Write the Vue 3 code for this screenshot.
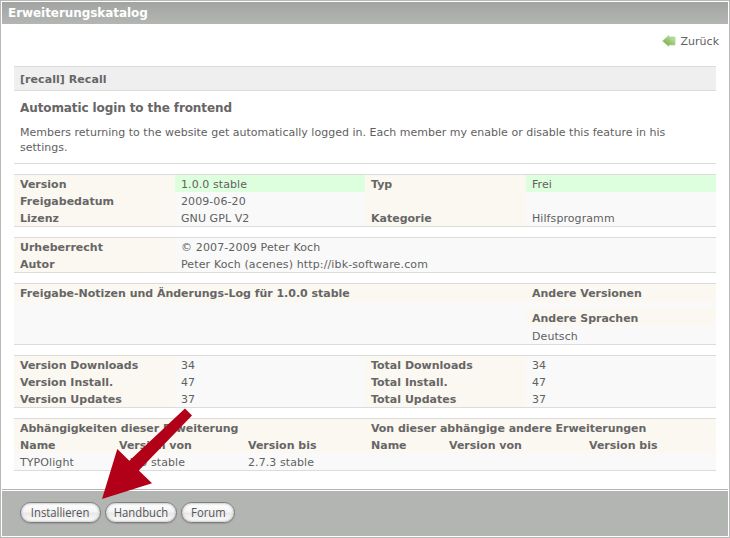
<script setup>
const stats = [
  ['Version Downloads', '34', 'Total Downloads', '34'],
  ['Version Install.', '47', 'Total Install.', '47'],
  ['Version Updates', '37', 'Total Updates', '37'],
]
const info = [
  ['Version', '1.0.0 stable', 'Typ', 'Frei'],
  ['Freigabedatum', '2009-06-20', '', ''],
  ['Lizenz', 'GNU GPL V2', 'Kategorie', 'Hilfsprogramm'],
]
const authors = [
  ['Urheberrecht', '© 2007-2009 Peter Koch'],
  ['Autor', 'Peter Koch (acenes) http://ibk-software.com'],
]
</script>

<template>
  <div class="frame">
    <h1 class="bar"><span>Erweiterungskatalog</span></h1>
    <main class="content">
      <a class="back">
        <svg width="14" height="12" viewBox="0 0 14 12">
          <defs>
            <linearGradient id="leaf" x1="0" y1="1" x2="1" y2="0">
              <stop offset="0.1" stop-color="#72b03e" />
              <stop offset="0.5" stop-color="#98c673" />
              <stop offset="1" stop-color="#d3e8c3" />
            </linearGradient>
          </defs>
          <path d="M0.6 6 L6.8 0.6 V2.1 H13 V9.9 H6.8 V11.4 Z" fill="url(#leaf)" stroke="#a5cb88" stroke-width=".7" />
        </svg>
        <span>Zurück</span>
      </a>
      <h2 class="title"><span>[recall] Recall</span></h2>
      <section class="intro">
        <h3><span>Automatic login to the frontend</span></h3>
        <p>Members returning to the website get automatically logged in. Each member my enable or disable this feature in his<br>settings.</p>
      </section>

      <section class="grid four">
        <template v-for="(row, r) in info" :key="r">
          <div v-for="(cell, c) in row" :key="c" :class="[c % 2 ? 'val' : 'key', { hot: r === 0 && c % 2 }]"><span>{{ cell }}</span></div>
        </template>
      </section>

      <section class="grid two">
        <template v-for="row in authors" :key="row[0]">
          <div class="key"><span>{{ row[0] }}</span></div>
          <div class="val"><span>{{ row[1] }}</span></div>
        </template>
      </section>

      <section class="grid notes">
        <div class="key"><span>Freigabe-Notizen und Änderungs-Log für 1.0.0 stable</span></div>
        <div class="side">
          <div class="key"><span>Andere Versionen</span></div>
          <div class="key second"><span>Andere Sprachen</span></div>
          <div class="val"><span>Deutsch</span></div>
        </div>
      </section>

      <section class="grid four">
        <template v-for="row in stats" :key="row[0]">
          <div v-for="(cell, c) in row" :key="c" :class="c % 2 ? 'val' : 'key'"><span>{{ cell }}</span></div>
        </template>
      </section>

      <section class="grid deps">
        <div class="key wide"><span>Abhängigkeiten dieser Erweiterung</span></div>
        <div class="key wide"><span>Von dieser abhängige andere Erweiterungen</span></div>
        <div class="key"><span>Name</span></div>
        <div class="key"><span>Version von</span></div>
        <div class="key"><span>Version bis</span></div>
        <div class="key"><span>Name</span></div>
        <div class="key"><span>Version von</span></div>
        <div class="key"><span>Version bis</span></div>
        <div class="val"><span>TYPOlight</span></div>
        <div class="val"><span>2.7.0 stable</span></div>
        <div class="val"><span>2.7.3 stable</span></div>
        <div class="val"></div><div class="val"></div><div class="val"></div>
      </section>
    </main>
    <footer class="actions">
      <button class="b1"><span>Installieren</span></button>
      <button class="b2"><span>Handbuch</span></button>
      <button class="b3"><span>Forum</span></button>
    </footer>
    <svg class="pointer" width="92" height="92" viewBox="101 408 92 92">
      <path d="M102 499 L117.3 449 L129.3 460.8 L185 408.5 L192 415.5 L138.8 470.5 L152 483.3 Z" fill="#b10018" />
    </svg>
  </div>
</template>

<style>
body { margin: 0; }
</style>
<style scoped>
* { box-sizing: border-box; }
.frame {
  position: relative;
  width: 730px;
  height: 538px;
  padding: 1px;
  border: 1px solid #b8b8b8;
  background: #fff;
  display: flex;
  flex-direction: column;
  font-family: "DejaVu Sans", sans-serif;
  font-size: 11px;
  color: #5f615f;
  white-space: nowrap;
}
h1, h2, h3, p { margin: 0; }
.bar {
  height: 22px;
  padding-left: 6px;
  background: linear-gradient(#a2a4a2, #b3b6b3);
  color: #fff;
  font-size: 12px;
  line-height: 22px;
  letter-spacing: -.06px;
}
.content { padding: 0 12px; flex: 1; }
.back {
  display: flex;
  justify-content: flex-end;
  align-items: center;
  gap: 5px;
  height: 42px;
  margin-right: -3px;
  padding-bottom: 8px;
}
.title {
  height: 25px;
  border: solid #dcdcdc;
  border-width: 1px 0;
  background: #efefef;
  padding-left: 6px;
  font-size: 11px;
  line-height: 25px;
  letter-spacing: .06px;
  color: #666;
}
.intro {
  height: 73px;
  border-bottom: 1px solid #dcdcdc;
  padding: 9px 6px 0;
}
.intro h3 { font-size: 12px; line-height: 16px; color: #666; letter-spacing: -.1px; }
.intro p { margin-top: 9px; line-height: 15px; letter-spacing: .01px; }
.grid {
  display: grid;
  margin-top: 10px;
  border: solid #dcdcdc;
  border-width: 1px 0;
  grid-auto-rows: 17px;
  line-height: 19px;
}
.key, .val { padding-left: 6px; height: 17px; }
.key { background: #fbf8f1; font-weight: bold; color: #666; }
.val { background: #f9f9f9; letter-spacing: .08px; }
.two .val { letter-spacing: .13px; }
.hot { background: #deffde; }
.four { grid-template-columns: 161px 190px 161px 190px; }
.two { grid-template-columns: 161px 541px; }
.notes { grid-template-columns: 512px 190px; grid-auto-rows: 60px; background: #f9f9f9; line-height: 20px; }
.notes .key, .notes .val { height: 18px; }
.notes .key { letter-spacing: -.02px; }
.notes .second { margin-top: 6px; }
.notes .second, .notes .val { line-height: 22px; }
.notes .val { background: none; }
.deps { grid-template-columns: 99px 129px 123px 78px 140px 133px; }
.wide { grid-column: span 3; letter-spacing: -.05px; }
.actions {
  height: 47px;
  border-top: 1px solid #b5b5b5;
  background: linear-gradient(#fff 1px, #b3b5b2 1px);
  display: flex;
  gap: 4px;
  padding: 12px 0 0 18px;
}
button {
  height: 21px;
  padding: 0;
  border: 1px solid #7d7f7d;
  border-radius: 11px;
  background: linear-gradient(#fff 0, #f5f5f5 45%, #e8e8e8 55%, #fff);
  box-shadow: inset 0 0 2px 1px #ccc, 0 1px 1px #999;
  font: 12px/18px "Open Sans", sans-serif;
  color: #555;
}
button span { display: inline-block; transform: scaleX(.94); }
.b1 { width: 81px; }
.b2 { width: 72px; }
.b3 { width: 54px; }
.pointer { position: absolute; left: 100px; top: 407px; }
</style>
